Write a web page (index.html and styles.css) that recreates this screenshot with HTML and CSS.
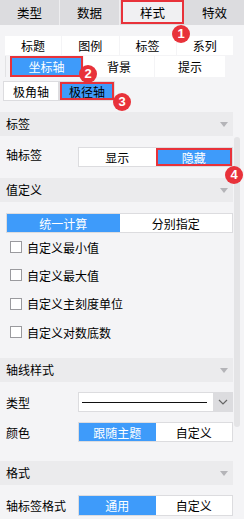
FILE: index.html
```html
<!DOCTYPE html>
<html lang="zh">
<head>
  <meta charset="UTF-8" />
  <title>样式 - 坐标轴</title>
  <link rel="stylesheet" href="styles.css">
</head>
<body>
  <div class="page">
    <div class="topbar">
      <div class="tab">类型</div>
      <div class="tab">数据</div>
      <div class="tab active">样式</div>
      <div class="tab">特效</div>
    </div>

    <div class="content">
      <div class="main">
        <div class="subtabs row1">
          <div class="cell">标题</div>
          <div class="cell">图例</div>
          <div class="cell">标签</div>
          <div class="cell">系列</div>
        </div>
        <div class="subtabs row2">
          <div class="cell selected mark">坐标轴</div>
          <div class="cell">背景</div>
          <div class="cell">提示</div>
        </div>
        <div class="axis-tabs">
          <div class="cell">极角轴</div>
          <div class="cell selected mark">极径轴</div>
        </div>

        <div class="section-head">标签<span class="arrow"></span></div>
        <div class="field top">
          <div class="label">轴标签</div>
          <div class="seg">
            <div class="opt">显示</div>
            <div class="opt on mark">隐藏</div>
          </div>
        </div>

        <div class="section-head">值定义<span class="arrow"></span></div>
        <div class="seg wide">
          <div class="opt on">统一计算</div>
          <div class="opt">分别指定</div>
        </div>
        <div class="checks">
          <label class="check"><span class="box"></span>自定义最小值</label>
          <label class="check"><span class="box"></span>自定义最大值</label>
          <label class="check"><span class="box"></span>自定义主刻度单位</label>
          <label class="check"><span class="box"></span>自定义对数底数</label>
        </div>

        <div class="section-head gap">轴线样式<span class="arrow"></span></div>
        <div class="field">
          <div class="label">类型</div>
          <div class="select">
            <div class="line-preview"><span></span></div>
            <div class="drop">
              <svg width="10" height="6" viewBox="0 0 10 6"><path d="M1 1l4 4 4-4" fill="none" stroke="#666" stroke-width="1.2"/></svg>
            </div>
          </div>
        </div>
        <div class="field">
          <div class="label">颜色</div>
          <div class="seg">
            <div class="opt on">跟随主题</div>
            <div class="opt">自定义</div>
          </div>
        </div>

        <div class="section-head gap-lg">格式<span class="arrow"></span></div>
        <div class="field">
          <div class="label">轴标签格式</div>
          <div class="seg tall">
            <div class="opt on">通用</div>
            <div class="opt">自定义</div>
          </div>
        </div>
      </div>
      <div class="scrollbar"><div class="thumb"></div></div>
    </div>

    <!-- step markers -->
    <span class="step s1">1</span>
    <span class="step s2">2</span>
    <span class="step s3">3</span>
    <span class="step s4">4</span>
  </div>
</body>
</html>
```

FILE: styles.css
```css
* {
  box-sizing: border-box;
}

body {
  margin: 0;
  background: #f4f4f6;
  font-family: "Noto Sans CJK SC", "Noto Sans", sans-serif;
  font-size: 12px;
  color: #000;
}

.page {
  position: relative;
  width: 244px;
  height: 519px;
  overflow: hidden;
}

.topbar {
  display: flex;
  height: 25px;
  background: #dcdcdf;
}

.tab {
  flex: 1;
  display: flex;
  align-items: center;
  justify-content: center;
  font-size: 12.5px;
  border-right: 1px solid #eeeef0;
}

.tab:last-child {
  border-right: none;
}

.tab.active {
  background: #f0f0f2;
  border: 2px solid #e8323a;
  margin: 0 1px 1px 1px;
}

.content {
  display: flex;
}

.main {
  width: 233px;
}

.scrollbar {
  flex: 1;
  padding: 112px 3px 0 1px;
}

.thumb {
  width: 6px;
  height: 290px;
  border-radius: 3px;
  background: #e4e4e6;
}

.subtabs {
  display: flex;
  gap: 1px;
  margin: 0 0 0 5px;
}

.row1 {
  margin-top: 11px;
  height: 19px;
}

.row2 {
  margin-top: 1px;
  height: 21px;
  padding-left: 4px;
  border-left: 1px solid #e2e2e4;
  margin-right: 8px;
}

.subtabs .cell {
  flex: 1;
  background: #fff;
  display: flex;
  align-items: center;
  justify-content: center;
}

.row2 .cell:first-child {
  flex: 0 0 73px;
}

.cell.selected {
  background: #3e9bfa;
  color: #fff;
}

.mark {
  outline: 2px solid #e8323a;
  outline-offset: -2px;
}

.axis-tabs {
  display: flex;
  gap: 2px;
  margin: 4px 0 0 3px;
  width: 112px;
  height: 20px;
  background: #dcdcdf;
  padding: 1px;
}

.axis-tabs .cell {
  flex: 1;
  background: #fff;
  display: flex;
  align-items: center;
  justify-content: center;
}

.axis-tabs .cell.selected {
  background: #3e9bfa;
  color: #000;
}

.section-head {
  position: relative;
  margin-top: 11px;
  height: 24px;
  line-height: 24px;
  padding-left: 6px;
  background: #ebebed;
}

.section-head.gap {
  margin-top: 12px;
}

.section-head.gap-lg {
  margin-top: 19px;
}

.arrow {
  position: absolute;
  right: 5px;
  top: 10px;
  border-left: 4px solid transparent;
  border-right: 4px solid transparent;
  border-top: 5px solid #b4b4b8;
}

.field {
  display: flex;
  align-items: center;
  margin-top: 10px;
  padding-left: 6px;
}

.field.top {
  margin-top: 11px;
  align-items: flex-start;
}

.field.top .label {
  line-height: 16px;
}

.label {
  width: 72px;
}

.seg {
  display: flex;
  width: 155px;
  height: 20px;
  border: 1px solid #dcdcdf;
  background: #fff;
}

.seg.tall {
  height: 21px;
}

.seg.wide {
  width: 227px;
  margin: 11px 0 0 6px;
}

.opt {
  flex: 1;
  display: flex;
  align-items: center;
  justify-content: center;
}

.opt.on {
  background: #3e9bfa;
  color: #fff;
}

.checks {
  display: flex;
  flex-direction: column;
}

.check {
  display: flex;
  align-items: center;
  height: 28.3px;
  padding-left: 10px;
}

.box {
  width: 12px;
  height: 12px;
  border: 1px solid #9a9a9e;
  background: #fff;
  margin-right: 5px;
}

.select {
  display: flex;
  width: 155px;
  height: 20px;
  border: 1px solid #dcdcdf;
  background: #fff;
}

.line-preview {
  flex: 1;
  display: flex;
  align-items: center;
  padding: 0 6px 0 3px;
}

.line-preview span {
  flex: 1;
  height: 1px;
  background: #111;
}

.drop {
  width: 19px;
  background: #dcdcdf;
  display: flex;
  align-items: center;
  justify-content: center;
}

.step {
  position: absolute;
  width: 18px;
  height: 18px;
  border-radius: 50%;
  background: #e8323a;
  color: #fff;
  font-family: "Liberation Sans", sans-serif;
  font-weight: bold;
  font-size: 13px;
  line-height: 18px;
  text-align: center;
}

.s1 { left: 172px; top: 25px; }
.s2 { left: 79px; top: 65px; }
.s3 { left: 113px; top: 93px; }
.s4 { left: 225px; top: 166px; }
```
